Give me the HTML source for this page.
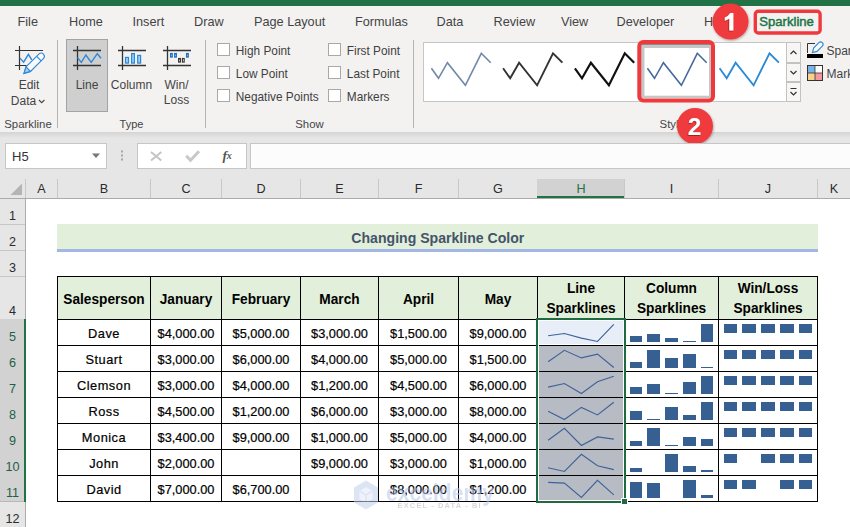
<!DOCTYPE html>
<html><head><meta charset="utf-8"><style>
html,body{margin:0;padding:0;width:850px;height:527px;overflow:hidden;background:#fff}
svg{display:block;font-family:"Liberation Sans", sans-serif}
</style></head><body>
<svg width="850" height="527" viewBox="0 0 850 527">
<rect x="0" y="0" width="850" height="527" fill="#e6e6e6" />
<rect x="0" y="0" width="850" height="6" fill="#217346" />
<rect x="0" y="6" width="850" height="126" fill="#f3f2f1" />
<defs><linearGradient id="sh" x1="0" y1="0" x2="0" y2="1"><stop offset="0" stop-color="#d4d4d4"/><stop offset="1" stop-color="#e6e6e6"/></linearGradient></defs>
<rect x="0" y="132" width="850" height="6" fill="url(#sh)" />
<text x="17.5" y="26" font-size="12.7" fill="#444" font-weight="normal" text-anchor="start" >File</text>
<text x="69" y="26" font-size="12.7" fill="#444" font-weight="normal" text-anchor="start" >Home</text>
<text x="132.5" y="26" font-size="12.7" fill="#444" font-weight="normal" text-anchor="start" >Insert</text>
<text x="194" y="26" font-size="12.7" fill="#444" font-weight="normal" text-anchor="start" >Draw</text>
<text x="254" y="26" font-size="12.7" fill="#444" font-weight="normal" text-anchor="start" >Page Layout</text>
<text x="355" y="26" font-size="12.7" fill="#444" font-weight="normal" text-anchor="start" >Formulas</text>
<text x="436.5" y="26" font-size="12.7" fill="#444" font-weight="normal" text-anchor="start" >Data</text>
<text x="493.5" y="26" font-size="12.7" fill="#444" font-weight="normal" text-anchor="start" >Review</text>
<text x="561" y="26" font-size="12.7" fill="#444" font-weight="normal" text-anchor="start" >View</text>
<text x="616.5" y="26" font-size="12.7" fill="#444" font-weight="normal" text-anchor="start" >Developer</text>
<text x="704" y="26" font-size="12.7" fill="#444" font-weight="normal" text-anchor="start" >H</text>
<text x="759.3" y="26" font-size="13.1" fill="#217346" font-weight="normal" text-anchor="start" stroke="#217346" stroke-width="0.45">Sparkline</text>
<rect x="57" y="40" width="1" height="88" fill="#b4b4b4" />
<rect x="205" y="40" width="1" height="88" fill="#b4b4b4" />
<rect x="413" y="40" width="1" height="88" fill="#b4b4b4" />
<text x="28" y="128" font-size="11.4" fill="#444" font-weight="normal" text-anchor="middle" >Sparkline</text>
<text x="131.5" y="128" font-size="11" fill="#444" font-weight="normal" text-anchor="middle" >Type</text>
<text x="309.5" y="128" font-size="11.4" fill="#444" font-weight="normal" text-anchor="middle" >Show</text>
<text x="659.6" y="128" font-size="11.4" fill="#444" font-weight="normal" text-anchor="start" >Style</text>
<path d="M15,50.5H43 M15,65.5H26.5 M19.5,46V70" stroke="#333" stroke-width="1.2" fill="none" />
<path d="M19.9,58.1 L23.65,62.2 L28.4,54.3 L31.8,59.8" stroke="#2b88d8" stroke-width="1.4" fill="none" />
<path d="M24,73.4 L26.0,66.9 L39.1,53.9 A3.2,3.2 0 0 1 43.6,58.4 L30.5,71.4 Z" stroke="#2b88d8" stroke-width="1.1" fill="#f8fafd" />
<path d="M24,73.4 L26.0,66.9 L30.5,71.4 Z" stroke="#2b88d8" stroke-width="1.1" fill="#a6cdf2" />
<path d="M36.65,56.35 L41.15,60.85" stroke="#2b88d8" stroke-width="1.1" fill="none" />
<text x="29" y="89" font-size="12" fill="#444" font-weight="normal" text-anchor="middle" >Edit</text>
<text x="23.5" y="104.7" font-size="12" fill="#444" font-weight="normal" text-anchor="middle" >Data</text>
<path d="M39,100 L41.7,102.7 L44.4,100" stroke="#444" stroke-width="1.1" fill="none" />
<rect x="66.5" y="39.5" width="41" height="72" fill="#cfcfcf" stroke="#a3a3a3" stroke-width="1"/>
<path d="M73,50.5H101 M73,65.5H101 M77.5,46V70" stroke="#333" stroke-width="1.3" fill="none" />
<path d="M77.5,57.6 L81.3,62.4 L85.9,55 L91.2,62.4 L97.3,53.7 L101,58.3" stroke="#2b88d8" stroke-width="1.4" fill="none" />
<text x="87" y="88.8" font-size="12" fill="#444" font-weight="normal" text-anchor="middle" >Line</text>
<path d="M118,50.5H146 M118,65.5H146 M122.5,46V70" stroke="#333" stroke-width="1.3" fill="none" />
<rect x="125.5" y="57.4" width="3.0" height="5.700000000000003" fill="#9fd0f5" stroke="#2b88d8" stroke-width="1.2"/>
<rect x="131.6" y="53.6" width="2.8000000000000114" height="9.5" fill="#9fd0f5" stroke="#2b88d8" stroke-width="1.2"/>
<rect x="137.7" y="55.4" width="2.9000000000000057" height="7.700000000000003" fill="#9fd0f5" stroke="#2b88d8" stroke-width="1.2"/>
<text x="131.5" y="88.8" font-size="12" fill="#444" font-weight="normal" text-anchor="middle" >Column</text>
<path d="M163,50.5H191 M163,65.5H191 M167.5,46V70" stroke="#333" stroke-width="1.3" fill="none" />
<rect x="170.5" y="53.5" width="1.8" height="3.6" fill="#9fd0f5" stroke="#1f6fc0" stroke-width="1.1"/>
<rect x="174.6" y="53.5" width="1.8" height="3.6" fill="#9fd0f5" stroke="#1f6fc0" stroke-width="1.1"/>
<rect x="186.5" y="53.5" width="1.8" height="3.6" fill="#9fd0f5" stroke="#1f6fc0" stroke-width="1.1"/>
<rect x="178.6" y="58.5" width="1.8" height="3.6" fill="#f3f2f1" stroke="#333" stroke-width="1.1"/>
<rect x="182.4" y="58.5" width="1.8" height="3.6" fill="#f3f2f1" stroke="#333" stroke-width="1.1"/>
<text x="176.5" y="88.8" font-size="12" fill="#444" font-weight="normal" text-anchor="middle" >Win/</text>
<text x="176.5" y="104.3" font-size="12" fill="#444" font-weight="normal" text-anchor="middle" >Loss</text>
<rect x="217.5" y="43.5" width="12" height="12" fill="#ffffff" stroke="#a8a8a8" stroke-width="1"/>
<text transform="translate(235.8,54.7) scale(0.94,1)" font-size="12.6" fill="#3f3f3f" font-weight="normal" text-anchor="start" >High Point</text>
<rect x="217.5" y="66.5" width="12" height="12" fill="#ffffff" stroke="#a8a8a8" stroke-width="1"/>
<text transform="translate(235.8,77.7) scale(0.94,1)" font-size="12.6" fill="#3f3f3f" font-weight="normal" text-anchor="start" >Low Point</text>
<rect x="217.5" y="89.5" width="12" height="12" fill="#ffffff" stroke="#a8a8a8" stroke-width="1"/>
<text transform="translate(235.8,100.7) scale(0.94,1)" font-size="12.6" fill="#3f3f3f" font-weight="normal" text-anchor="start" >Negative Points</text>
<rect x="328.5" y="43.5" width="12" height="12" fill="#ffffff" stroke="#a8a8a8" stroke-width="1"/>
<text transform="translate(346.8,54.7) scale(0.94,1)" font-size="12.6" fill="#3f3f3f" font-weight="normal" text-anchor="start" >First Point</text>
<rect x="328.5" y="66.5" width="12" height="12" fill="#ffffff" stroke="#a8a8a8" stroke-width="1"/>
<text transform="translate(346.8,77.7) scale(0.94,1)" font-size="12.6" fill="#3f3f3f" font-weight="normal" text-anchor="start" >Last Point</text>
<rect x="328.5" y="89.5" width="12" height="12" fill="#ffffff" stroke="#a8a8a8" stroke-width="1"/>
<text transform="translate(346.8,100.7) scale(0.94,1)" font-size="12.6" fill="#3f3f3f" font-weight="normal" text-anchor="start" >Markers</text>
<rect x="423.5" y="42.5" width="363" height="59" fill="#ffffff" stroke="#c6c6c6" stroke-width="1"/>
<rect x="641" y="44" width="70" height="54" fill="#c6c6c6" />
<rect x="641" y="44" width="70" height="1" fill="#8c8c8c" />
<rect x="644.5" y="48" width="64.5" height="47.7" fill="#ffffff" />
<path d="M431.4,68.3 L438.5,78.3 L447.4,62.7 L465.4,85.3 L481.3,53.3 L490.7,62.7" stroke="#7088a8" stroke-width="1.6" fill="none" stroke-linejoin="miter"/>
<path d="M503.1,68.3 L510.2,78.3 L519.1,62.7 L537.1,85.3 L553.0,53.3 L562.4,62.7" stroke="#333333" stroke-width="1.9" fill="none" stroke-linejoin="miter"/>
<path d="M574.9,68.3 L582.0,78.3 L590.9,62.7 L608.9,85.3 L624.8,53.3 L634.2,62.7" stroke="#111111" stroke-width="2.2" fill="none" stroke-linejoin="miter"/>
<path d="M647.4,68.3 L654.5,78.3 L663.4,62.7 L681.4,85.3 L697.3,53.3 L706.7,62.7" stroke="#44679d" stroke-width="1.5" fill="none" stroke-linejoin="miter"/>
<path d="M719.6,68.3 L726.7,78.3 L735.6,62.7 L753.6,85.3 L769.5,53.3 L778.9,62.7" stroke="#2a8ad6" stroke-width="1.8" fill="none" stroke-linejoin="miter"/>
<rect x="639.3" y="42" width="73.7" height="58.4" fill="none" stroke="#ee3a3d" stroke-width="4" rx="4"/>
<rect x="786.5" y="42.5" width="14" height="20.0" fill="#f7f6f5" stroke="#c2c2c2" stroke-width="1"/>
<rect x="786.5" y="63.5" width="14" height="18.0" fill="#f7f6f5" stroke="#c2c2c2" stroke-width="1"/>
<rect x="786.5" y="82.5" width="14" height="19.0" fill="#f7f6f5" stroke="#c2c2c2" stroke-width="1"/>
<path d="M790.5,54 L793.5,51 L796.5,54" stroke="#333" stroke-width="1.2" fill="none" />
<path d="M790.5,71 L793.5,74 L796.5,71" stroke="#333" stroke-width="1.2" fill="none" />
<path d="M790.5,88.5 H796.5 M790.5,92 L793.5,95 L796.5,92" stroke="#333" stroke-width="1.2" fill="none" />
<path d="M807.5,53 V43.5 H815" stroke="#333" stroke-width="1" fill="none" />
<rect x="807" y="54" width="16" height="4" fill="#000" />
<path d="M812.5,52.5 L813.6,48.0 L818.9,42.7 A2.4,2.4 0 0 1 822.3,46.1 L817.0,51.4 Z" stroke="#2b88d8" stroke-width="1.1" fill="#f8fafd" />
<text x="826.5" y="55" font-size="12" fill="#444" font-weight="normal" text-anchor="start" >Spar</text>
<rect x="807.5" y="65.5" width="15" height="15" fill="#fff" stroke="#333" stroke-width="1"/>
<rect x="808" y="66" width="7" height="7" fill="#78b4e8" />
<rect x="815" y="73" width="7" height="7" fill="#f4999d" />
<rect x="808" y="73" width="7" height="7" fill="#f6d38c" />
<path d="M815,66 V80 M808,73 H822" stroke="#333" stroke-width="0.8" fill="none" />
<text x="826.5" y="78" font-size="12" fill="#444" font-weight="normal" text-anchor="start" >Mark</text>
<rect x="755.3" y="11.3" width="64.8" height="21.7" fill="none" stroke="#ee3a3d" stroke-width="3.4" rx="3"/>
<filter id="ds" x="-30%" y="-30%" width="160%" height="160%"><feDropShadow dx="0.5" dy="1" stdDeviation="1.2" flood-color="#000" flood-opacity="0.35"/></filter>
<filter id="ds2" x="-30%" y="-30%" width="160%" height="160%"><feDropShadow dx="-0.6" dy="0.8" stdDeviation="0.4" flood-color="#000" flood-opacity="0.45"/></filter>
<circle cx="730.5" cy="21.5" r="18" fill="#ef3a3c" filter="url(#ds)"/>
<path d="M729.3,30.5 L729.3,18.6 Q727.3,20.1 724.8,20.8 L724.8,17.6 Q728.3,16.3 730.2,13 L733.4,13 L733.4,30.5 Z" fill="#fff" filter="url(#ds2)"/>
<circle cx="695" cy="126" r="18" fill="#ef3a3c" filter="url(#ds)"/>
<text x="694.5" y="134.7" font-size="24.5" fill="#fff" font-weight="bold" text-anchor="middle" filter="url(#ds2)">2</text>
<rect x="5.5" y="143.5" width="101" height="25" fill="#ffffff" stroke="#c6c6c6" stroke-width="1"/>
<text x="12" y="161" font-size="13" fill="#333" font-weight="normal" text-anchor="start" >H5</text>
<path d="M92,153.5 H100 L96,158 Z" stroke="#777" stroke-width="0" fill="#777" />
<rect x="121" y="150.5" width="2" height="2" fill="#a6a6a6" />
<rect x="121" y="154.5" width="2" height="2" fill="#a6a6a6" />
<rect x="121" y="158.5" width="2" height="2" fill="#a6a6a6" />
<rect x="137.5" y="143.5" width="109" height="25" fill="#ffffff" stroke="#c6c6c6" stroke-width="1"/>
<path d="M151,152 L161.3,160.6 M161.3,152 L151,160.6" stroke="#c4c4c4" stroke-width="1.9" fill="none" />
<path d="M186.2,155.8 L190.5,160.3 L199,151.3" stroke="#c8c8c8" stroke-width="2.9" fill="none" />
<text x="222.5" y="159.5" font-size="13.5" fill="#555" font-weight="bold" text-anchor="start" font-style="italic" font-family="Liberation Serif">f</text>
<text x="226.8" y="159.3" font-size="10" fill="#555" font-weight="bold" text-anchor="start" font-style="italic" font-family="Liberation Serif">x</text>
<rect x="250.5" y="143.5" width="610" height="25" fill="#fcfcfc" stroke="#c6c6c6" stroke-width="1"/>
<rect x="25" y="179" width="825" height="19" fill="#e6e6e6" />
<text x="41.5" y="193" font-size="12.6" fill="#2b2b2b" font-weight="normal" text-anchor="middle" >A</text>
<rect x="57" y="179" width="1" height="19" fill="#c8c8c8" />
<text x="104.0" y="193" font-size="12.6" fill="#2b2b2b" font-weight="normal" text-anchor="middle" >B</text>
<rect x="150" y="179" width="1" height="19" fill="#c8c8c8" />
<text x="186.0" y="193" font-size="12.6" fill="#2b2b2b" font-weight="normal" text-anchor="middle" >C</text>
<rect x="221" y="179" width="1" height="19" fill="#c8c8c8" />
<text x="261.0" y="193" font-size="12.6" fill="#2b2b2b" font-weight="normal" text-anchor="middle" >D</text>
<rect x="300" y="179" width="1" height="19" fill="#c8c8c8" />
<text x="339.5" y="193" font-size="12.6" fill="#2b2b2b" font-weight="normal" text-anchor="middle" >E</text>
<rect x="378" y="179" width="1" height="19" fill="#c8c8c8" />
<text x="418.5" y="193" font-size="12.6" fill="#2b2b2b" font-weight="normal" text-anchor="middle" >F</text>
<rect x="458" y="179" width="1" height="19" fill="#c8c8c8" />
<text x="498.0" y="193" font-size="12.6" fill="#2b2b2b" font-weight="normal" text-anchor="middle" >G</text>
<rect x="537" y="179" width="1" height="19" fill="#c8c8c8" />
<rect x="537" y="179" width="87" height="18" fill="#d2d2d2" />
<rect x="537" y="196" width="88" height="2" fill="#217346" />
<text x="581.0" y="193" font-size="12.6" fill="#217346" font-weight="normal" text-anchor="middle" >H</text>
<rect x="624" y="179" width="1" height="19" fill="#c8c8c8" />
<text x="671.5" y="193" font-size="12.6" fill="#2b2b2b" font-weight="normal" text-anchor="middle" >I</text>
<rect x="718" y="179" width="1" height="19" fill="#c8c8c8" />
<text x="768.0" y="193" font-size="12.6" fill="#2b2b2b" font-weight="normal" text-anchor="middle" >J</text>
<rect x="817" y="179" width="1" height="19" fill="#c8c8c8" />
<text x="834.0" y="193" font-size="12.6" fill="#2b2b2b" font-weight="normal" text-anchor="middle" >K</text>
<rect x="850" y="179" width="1" height="19" fill="#c8c8c8" />
<rect x="25" y="179" width="1" height="19" fill="#c8c8c8" />
<path d="M10.5,195 L22,183.5 L22,195 Z" stroke="none" stroke-width="0" fill="#b4b4b4" />
<rect x="0" y="198" width="850" height="1" fill="#ababab" />
<rect x="26" y="199" width="824" height="328" fill="#ffffff" />
<rect x="0" y="199" width="25" height="328" fill="#e6e6e6" />
<text x="12.6" y="220.1" font-size="12.6" fill="#2b2b2b" font-weight="normal" text-anchor="middle" >1</text>
<rect x="0" y="224" width="25" height="1" fill="#c6c6c6" />
<text x="12.6" y="246.1" font-size="12.6" fill="#2b2b2b" font-weight="normal" text-anchor="middle" >2</text>
<rect x="0" y="250" width="25" height="1" fill="#c6c6c6" />
<text x="12.6" y="272.1" font-size="12.6" fill="#2b2b2b" font-weight="normal" text-anchor="middle" >3</text>
<rect x="0" y="276" width="25" height="1" fill="#c6c6c6" />
<text x="12.6" y="315.1" font-size="12.6" fill="#2b2b2b" font-weight="normal" text-anchor="middle" >4</text>
<rect x="0" y="319" width="25" height="1" fill="#c6c6c6" />
<rect x="0" y="319" width="24" height="26" fill="#d2d2d2" />
<text x="12.6" y="341.1" font-size="12.6" fill="#1f5f45" font-weight="normal" text-anchor="middle" >5</text>
<rect x="0" y="345" width="24" height="1" fill="#b8b8b8" />
<rect x="0" y="345" width="24" height="26" fill="#d2d2d2" />
<text x="12.6" y="367.1" font-size="12.6" fill="#1f5f45" font-weight="normal" text-anchor="middle" >6</text>
<rect x="0" y="371" width="24" height="1" fill="#b8b8b8" />
<rect x="0" y="371" width="24" height="26" fill="#d2d2d2" />
<text x="12.6" y="393.1" font-size="12.6" fill="#1f5f45" font-weight="normal" text-anchor="middle" >7</text>
<rect x="0" y="397" width="24" height="1" fill="#b8b8b8" />
<rect x="0" y="397" width="24" height="26" fill="#d2d2d2" />
<text x="12.6" y="419.1" font-size="12.6" fill="#1f5f45" font-weight="normal" text-anchor="middle" >8</text>
<rect x="0" y="423" width="24" height="1" fill="#b8b8b8" />
<rect x="0" y="423" width="24" height="26" fill="#d2d2d2" />
<text x="12.6" y="445.1" font-size="12.6" fill="#1f5f45" font-weight="normal" text-anchor="middle" >9</text>
<rect x="0" y="449" width="24" height="1" fill="#b8b8b8" />
<rect x="0" y="449" width="24" height="26" fill="#d2d2d2" />
<text x="12.6" y="471.1" font-size="12.6" fill="#1f5f45" font-weight="normal" text-anchor="middle" >10</text>
<rect x="0" y="475" width="24" height="1" fill="#b8b8b8" />
<rect x="0" y="475" width="24" height="26" fill="#d2d2d2" />
<text x="12.6" y="497.1" font-size="12.6" fill="#1f5f45" font-weight="normal" text-anchor="middle" >11</text>
<rect x="0" y="501" width="24" height="1" fill="#b8b8b8" />
<text x="12.6" y="523.1" font-size="12.6" fill="#2b2b2b" font-weight="normal" text-anchor="middle" >12</text>
<rect x="25" y="199" width="1" height="328" fill="#ababab" />
<rect x="24" y="319" width="2" height="183" fill="#217346" />
<rect x="57" y="224" width="761" height="25" fill="#e2efda" />
<rect x="57" y="249" width="761" height="3" fill="#a2b7e3" />
<text transform="translate(437.8,243.3) scale(0.91,1)" font-size="15.5" fill="#44546a" font-weight="bold" text-anchor="middle" >Changing Sparkline Color</text>
<rect x="57" y="276" width="760" height="43" fill="#e2efda" />
<rect x="539" y="321" width="84" height="23" fill="#e8eef8" />
<rect x="539" y="346" width="84" height="25" fill="#b7bbc4" />
<rect x="539" y="372" width="84" height="25" fill="#b7bbc4" />
<rect x="539" y="398" width="84" height="25" fill="#b7bbc4" />
<rect x="539" y="424" width="84" height="25" fill="#b7bbc4" />
<rect x="539" y="450" width="84" height="25" fill="#b7bbc4" />
<rect x="539" y="476" width="84" height="24" fill="#b7bbc4" />
<text transform="translate(104.0,304) scale(0.925,1)" font-size="14.8" fill="#000" font-weight="bold" text-anchor="middle" >Salesperson</text>
<text transform="translate(186.0,304) scale(0.925,1)" font-size="14.8" fill="#000" font-weight="bold" text-anchor="middle" >January</text>
<text transform="translate(261.0,304) scale(0.925,1)" font-size="14.8" fill="#000" font-weight="bold" text-anchor="middle" >February</text>
<text transform="translate(339.5,304) scale(0.925,1)" font-size="14.8" fill="#000" font-weight="bold" text-anchor="middle" >March</text>
<text transform="translate(418.5,304) scale(0.925,1)" font-size="14.8" fill="#000" font-weight="bold" text-anchor="middle" >April</text>
<text transform="translate(498.0,304) scale(0.925,1)" font-size="14.8" fill="#000" font-weight="bold" text-anchor="middle" >May</text>
<text transform="translate(581.0,293) scale(0.925,1)" font-size="14.8" fill="#000" font-weight="bold" text-anchor="middle" >Line</text>
<text transform="translate(581.0,313.4) scale(0.925,1)" font-size="14.8" fill="#000" font-weight="bold" text-anchor="middle" >Sparklines</text>
<text transform="translate(671.5,293) scale(0.925,1)" font-size="14.8" fill="#000" font-weight="bold" text-anchor="middle" >Column</text>
<text transform="translate(671.5,313.4) scale(0.925,1)" font-size="14.8" fill="#000" font-weight="bold" text-anchor="middle" >Sparklines</text>
<text transform="translate(768.0,293) scale(0.925,1)" font-size="14.8" fill="#000" font-weight="bold" text-anchor="middle" >Win/Loss</text>
<text transform="translate(768.0,313.4) scale(0.925,1)" font-size="14.8" fill="#000" font-weight="bold" text-anchor="middle" >Sparklines</text>
<text x="104.0" y="338.3" font-size="12.8" fill="#000" font-weight="normal" text-anchor="middle" stroke="#000" stroke-width="0.2" letter-spacing="0.5">Dave</text>
<text x="186.0" y="338.3" font-size="12.8" fill="#000" font-weight="normal" text-anchor="middle" stroke="#000" stroke-width="0.2">$4,000.00</text>
<text x="261.0" y="338.3" font-size="12.8" fill="#000" font-weight="normal" text-anchor="middle" stroke="#000" stroke-width="0.2">$5,000.00</text>
<text x="339.5" y="338.3" font-size="12.8" fill="#000" font-weight="normal" text-anchor="middle" stroke="#000" stroke-width="0.2">$3,000.00</text>
<text x="418.5" y="338.3" font-size="12.8" fill="#000" font-weight="normal" text-anchor="middle" stroke="#000" stroke-width="0.2">$1,500.00</text>
<text x="498.0" y="338.3" font-size="12.8" fill="#000" font-weight="normal" text-anchor="middle" stroke="#000" stroke-width="0.2">$9,000.00</text>
<path d="M548.1,335.8 L564.4,333.5 L581.4,338.1 L597.5,341.5 L613.8,324.3" stroke="#3e6299" stroke-width="1.1" fill="none" />
<rect x="630" y="336" width="12" height="6" fill="#376092" />
<rect x="647" y="334" width="13" height="8" fill="#376092" />
<rect x="665" y="338" width="13" height="4" fill="#376092" />
<rect x="683" y="341" width="13" height="1" fill="#376092" />
<rect x="701" y="324" width="12" height="18" fill="#376092" />
<rect x="724" y="324" width="13" height="9" fill="#376092" />
<rect x="742" y="324" width="14" height="9" fill="#376092" />
<rect x="761" y="324" width="14" height="9" fill="#376092" />
<rect x="780" y="324" width="14" height="9" fill="#376092" />
<rect x="799" y="324" width="13" height="9" fill="#376092" />
<text x="104.0" y="364.3" font-size="12.8" fill="#000" font-weight="normal" text-anchor="middle" stroke="#000" stroke-width="0.2" letter-spacing="0.5">Stuart</text>
<text x="186.0" y="364.3" font-size="12.8" fill="#000" font-weight="normal" text-anchor="middle" stroke="#000" stroke-width="0.2">$3,000.00</text>
<text x="261.0" y="364.3" font-size="12.8" fill="#000" font-weight="normal" text-anchor="middle" stroke="#000" stroke-width="0.2">$6,000.00</text>
<text x="339.5" y="364.3" font-size="12.8" fill="#000" font-weight="normal" text-anchor="middle" stroke="#000" stroke-width="0.2">$4,000.00</text>
<text x="418.5" y="364.3" font-size="12.8" fill="#000" font-weight="normal" text-anchor="middle" stroke="#000" stroke-width="0.2">$5,000.00</text>
<text x="498.0" y="364.3" font-size="12.8" fill="#000" font-weight="normal" text-anchor="middle" stroke="#000" stroke-width="0.2">$1,500.00</text>
<path d="M548.1,361.8 L564.4,350.3 L581.4,357.9 L597.5,354.1 L613.8,367.5" stroke="#3e6299" stroke-width="1.1" fill="none" />
<rect x="630" y="362" width="12" height="6" fill="#376092" />
<rect x="647" y="350" width="13" height="18" fill="#376092" />
<rect x="665" y="358" width="13" height="10" fill="#376092" />
<rect x="683" y="354" width="13" height="14" fill="#376092" />
<rect x="701" y="367" width="12" height="1" fill="#376092" />
<rect x="724" y="350" width="13" height="9" fill="#376092" />
<rect x="742" y="350" width="14" height="9" fill="#376092" />
<rect x="761" y="350" width="14" height="9" fill="#376092" />
<rect x="780" y="350" width="14" height="9" fill="#376092" />
<rect x="799" y="350" width="13" height="9" fill="#376092" />
<text x="104.0" y="390.3" font-size="12.8" fill="#000" font-weight="normal" text-anchor="middle" stroke="#000" stroke-width="0.2" letter-spacing="0.5">Clemson</text>
<text x="186.0" y="390.3" font-size="12.8" fill="#000" font-weight="normal" text-anchor="middle" stroke="#000" stroke-width="0.2">$3,000.00</text>
<text x="261.0" y="390.3" font-size="12.8" fill="#000" font-weight="normal" text-anchor="middle" stroke="#000" stroke-width="0.2">$4,000.00</text>
<text x="339.5" y="390.3" font-size="12.8" fill="#000" font-weight="normal" text-anchor="middle" stroke="#000" stroke-width="0.2">$1,200.00</text>
<text x="418.5" y="390.3" font-size="12.8" fill="#000" font-weight="normal" text-anchor="middle" stroke="#000" stroke-width="0.2">$4,500.00</text>
<text x="498.0" y="390.3" font-size="12.8" fill="#000" font-weight="normal" text-anchor="middle" stroke="#000" stroke-width="0.2">$6,000.00</text>
<path d="M548.1,387.1 L564.4,383.5 L581.4,393.5 L597.5,381.7 L613.8,376.3" stroke="#3e6299" stroke-width="1.1" fill="none" />
<rect x="630" y="387" width="12" height="7" fill="#376092" />
<rect x="647" y="384" width="13" height="10" fill="#376092" />
<rect x="665" y="393" width="13" height="1" fill="#376092" />
<rect x="683" y="382" width="13" height="12" fill="#376092" />
<rect x="701" y="376" width="12" height="18" fill="#376092" />
<rect x="724" y="376" width="13" height="9" fill="#376092" />
<rect x="742" y="376" width="14" height="9" fill="#376092" />
<rect x="761" y="376" width="14" height="9" fill="#376092" />
<rect x="780" y="376" width="14" height="9" fill="#376092" />
<rect x="799" y="376" width="13" height="9" fill="#376092" />
<text x="104.0" y="416.3" font-size="12.8" fill="#000" font-weight="normal" text-anchor="middle" stroke="#000" stroke-width="0.2" letter-spacing="0.5">Ross</text>
<text x="186.0" y="416.3" font-size="12.8" fill="#000" font-weight="normal" text-anchor="middle" stroke="#000" stroke-width="0.2">$4,500.00</text>
<text x="261.0" y="416.3" font-size="12.8" fill="#000" font-weight="normal" text-anchor="middle" stroke="#000" stroke-width="0.2">$1,200.00</text>
<text x="339.5" y="416.3" font-size="12.8" fill="#000" font-weight="normal" text-anchor="middle" stroke="#000" stroke-width="0.2">$6,000.00</text>
<text x="418.5" y="416.3" font-size="12.8" fill="#000" font-weight="normal" text-anchor="middle" stroke="#000" stroke-width="0.2">$3,000.00</text>
<text x="498.0" y="416.3" font-size="12.8" fill="#000" font-weight="normal" text-anchor="middle" stroke="#000" stroke-width="0.2">$8,000.00</text>
<path d="M548.1,411.2 L564.4,419.5 L581.4,407.4 L597.5,414.9 L613.8,402.3" stroke="#3e6299" stroke-width="1.1" fill="none" />
<rect x="630" y="411" width="12" height="9" fill="#376092" />
<rect x="647" y="419" width="13" height="1" fill="#376092" />
<rect x="665" y="407" width="13" height="13" fill="#376092" />
<rect x="683" y="415" width="13" height="5" fill="#376092" />
<rect x="701" y="402" width="12" height="18" fill="#376092" />
<rect x="724" y="402" width="13" height="9" fill="#376092" />
<rect x="742" y="402" width="14" height="9" fill="#376092" />
<rect x="761" y="402" width="14" height="9" fill="#376092" />
<rect x="780" y="402" width="14" height="9" fill="#376092" />
<rect x="799" y="402" width="13" height="9" fill="#376092" />
<text x="104.0" y="442.3" font-size="12.8" fill="#000" font-weight="normal" text-anchor="middle" stroke="#000" stroke-width="0.2" letter-spacing="0.5">Monica</text>
<text x="186.0" y="442.3" font-size="12.8" fill="#000" font-weight="normal" text-anchor="middle" stroke="#000" stroke-width="0.2">$3,400.00</text>
<text x="261.0" y="442.3" font-size="12.8" fill="#000" font-weight="normal" text-anchor="middle" stroke="#000" stroke-width="0.2">$9,000.00</text>
<text x="339.5" y="442.3" font-size="12.8" fill="#000" font-weight="normal" text-anchor="middle" stroke="#000" stroke-width="0.2">$1,000.00</text>
<text x="418.5" y="442.3" font-size="12.8" fill="#000" font-weight="normal" text-anchor="middle" stroke="#000" stroke-width="0.2">$5,000.00</text>
<text x="498.0" y="442.3" font-size="12.8" fill="#000" font-weight="normal" text-anchor="middle" stroke="#000" stroke-width="0.2">$4,000.00</text>
<path d="M548.1,440.3 L564.4,428.3 L581.4,445.5 L597.5,436.9 L613.8,439.1" stroke="#3e6299" stroke-width="1.1" fill="none" />
<rect x="630" y="441" width="12" height="5" fill="#376092" />
<rect x="647" y="428" width="13" height="18" fill="#376092" />
<rect x="665" y="445" width="13" height="1" fill="#376092" />
<rect x="683" y="437" width="13" height="9" fill="#376092" />
<rect x="701" y="439" width="12" height="7" fill="#376092" />
<rect x="724" y="428" width="13" height="9" fill="#376092" />
<rect x="742" y="428" width="14" height="9" fill="#376092" />
<rect x="761" y="428" width="14" height="9" fill="#376092" />
<rect x="780" y="428" width="14" height="9" fill="#376092" />
<rect x="799" y="428" width="13" height="9" fill="#376092" />
<text x="104.0" y="468.3" font-size="12.8" fill="#000" font-weight="normal" text-anchor="middle" stroke="#000" stroke-width="0.2" letter-spacing="0.5">John</text>
<text x="186.0" y="468.3" font-size="12.8" fill="#000" font-weight="normal" text-anchor="middle" stroke="#000" stroke-width="0.2">$2,000.00</text>
<text x="339.5" y="468.3" font-size="12.8" fill="#000" font-weight="normal" text-anchor="middle" stroke="#000" stroke-width="0.2">$9,000.00</text>
<text x="418.5" y="468.3" font-size="12.8" fill="#000" font-weight="normal" text-anchor="middle" stroke="#000" stroke-width="0.2">$3,000.00</text>
<text x="498.0" y="468.3" font-size="12.8" fill="#000" font-weight="normal" text-anchor="middle" stroke="#000" stroke-width="0.2">$1,000.00</text>
<path d="M548.1,467.7 L564.4,471.5 L581.4,454.3 L597.5,465.8 L613.8,469.6" stroke="#3e6299" stroke-width="1.1" fill="none" />
<rect x="630" y="468" width="12" height="4" fill="#376092" />
<rect x="665" y="454" width="13" height="18" fill="#376092" />
<rect x="683" y="466" width="13" height="6" fill="#376092" />
<rect x="701" y="470" width="12" height="2" fill="#376092" />
<rect x="724" y="454" width="13" height="9" fill="#376092" />
<rect x="761" y="454" width="14" height="9" fill="#376092" />
<rect x="780" y="454" width="14" height="9" fill="#376092" />
<rect x="799" y="454" width="13" height="9" fill="#376092" />
<text x="104.0" y="494.3" font-size="12.8" fill="#000" font-weight="normal" text-anchor="middle" stroke="#000" stroke-width="0.2" letter-spacing="0.5">David</text>
<text x="186.0" y="494.3" font-size="12.8" fill="#000" font-weight="normal" text-anchor="middle" stroke="#000" stroke-width="0.2">$7,000.00</text>
<text x="261.0" y="494.3" font-size="12.8" fill="#000" font-weight="normal" text-anchor="middle" stroke="#000" stroke-width="0.2">$6,700.00</text>
<text x="418.5" y="494.3" font-size="12.8" fill="#000" font-weight="normal" text-anchor="middle" stroke="#000" stroke-width="0.2">$8,000.00</text>
<text x="498.0" y="494.3" font-size="12.8" fill="#000" font-weight="normal" text-anchor="middle" stroke="#000" stroke-width="0.2">$1,200.00</text>
<path d="M548.1,482.4 L564.4,483.1 L581.4,497.5 L597.5,480.3 L613.8,494.9" stroke="#3e6299" stroke-width="1.1" fill="none" />
<rect x="630" y="482" width="12" height="16" fill="#376092" />
<rect x="647" y="483" width="13" height="15" fill="#376092" />
<rect x="683" y="480" width="13" height="18" fill="#376092" />
<rect x="701" y="495" width="12" height="3" fill="#376092" />
<rect x="724" y="480" width="13" height="9" fill="#376092" />
<rect x="742" y="480" width="14" height="9" fill="#376092" />
<rect x="780" y="480" width="14" height="9" fill="#376092" />
<rect x="799" y="480" width="13" height="9" fill="#376092" />
<rect x="57" y="276" width="1" height="226" fill="#000" />
<rect x="150" y="276" width="1" height="226" fill="#000" />
<rect x="221" y="276" width="1" height="226" fill="#000" />
<rect x="300" y="276" width="1" height="226" fill="#000" />
<rect x="378" y="276" width="1" height="226" fill="#000" />
<rect x="458" y="276" width="1" height="226" fill="#000" />
<rect x="537" y="276" width="1" height="226" fill="#000" />
<rect x="624" y="276" width="1" height="226" fill="#000" />
<rect x="718" y="276" width="1" height="226" fill="#000" />
<rect x="817" y="276" width="1" height="226" fill="#000" />
<rect x="57" y="276" width="761" height="1" fill="#000" />
<rect x="57" y="319" width="761" height="1" fill="#000" />
<rect x="57" y="345" width="761" height="1" fill="#000" />
<rect x="57" y="371" width="761" height="1" fill="#000" />
<rect x="57" y="397" width="761" height="1" fill="#000" />
<rect x="57" y="423" width="761" height="1" fill="#000" />
<rect x="57" y="449" width="761" height="1" fill="#000" />
<rect x="57" y="475" width="761" height="1" fill="#000" />
<rect x="57" y="501" width="761" height="1" fill="#000" />
<rect x="538" y="320" width="86" height="1" fill="#fff" />
<rect x="538" y="500" width="86" height="1" fill="#fff" />
<rect x="538" y="320" width="1" height="181" fill="#fff" />
<rect x="623" y="320" width="1" height="181" fill="#fff" />
<rect x="536" y="318" width="90" height="2" fill="#1d6b3f" />
<rect x="536" y="501" width="86" height="2" fill="#1d6b3f" />
<rect x="536" y="318" width="2" height="185" fill="#1d6b3f" />
<rect x="624" y="318" width="2" height="180" fill="#1d6b3f" />
<rect x="621" y="498" width="7" height="7" fill="#fff" />
<rect x="622" y="499" width="5" height="5" fill="#1d6b3f" />
<g opacity="0.55">
<path d="M366,480.5 L378,487.5 L378,502.5 L366,509.5 L354,502.5 L354,487.5 Z" fill="#c3d0ee"/>
<path d="M366,487 L372.5,491 L372.5,499 L366,503 L359.5,499 L359.5,491 Z" fill="#e3e9f7"/>
<path d="M366,495 L372.5,491 M366,495 L366,503 M366,495 L359.5,491" stroke="#c3d0ee" stroke-width="1.5" fill="none"/>
<text x="386" y="501" font-size="23" fill="#b9c8ec" font-weight="bold" text-anchor="start" textLength="108" lengthAdjust="spacingAndGlyphs">exceldemy</text>
<text x="397.6" y="508" font-size="7.5" fill="#b8b8b8" font-weight="bold" text-anchor="start" textLength="83" lengthAdjust="spacing">EXCEL - DATA - BI</text>
</g>
</svg></body></html>
